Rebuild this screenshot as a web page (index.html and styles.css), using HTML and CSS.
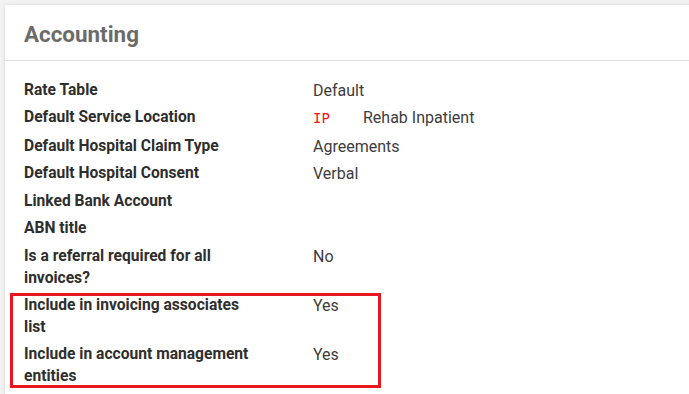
FILE: index.html
```html
<!DOCTYPE html>
<html>
<head>
<meta charset="utf-8">
<link rel="stylesheet" href="styles.css">
</head>
<body>
<div class="card">
  <div class="card-header"><h2 class="title">Accounting</h2></div>
  <div class="card-body">
    <div class="row"><div class="label">Rate Table</div><div class="value">Default</div></div>
    <div class="row"><div class="label">Default Service Location</div><div class="value"><code class="code">IP</code><span>Rehab Inpatient</span></div></div>
    <div class="row"><div class="label">Default Hospital Claim Type</div><div class="value">Agreements</div></div>
    <div class="row"><div class="label">Default Hospital Consent</div><div class="value">Verbal</div></div>
    <div class="row"><div class="label">Linked Bank Account</div><div class="value"></div></div>
    <div class="row"><div class="label">ABN title</div><div class="value"></div></div>
    <div class="row"><div class="label">Is a referral required for all invoices?</div><div class="value">No</div></div>
    <div class="row"><div class="label">Include in invoicing associates list</div><div class="value">Yes</div></div>
    <div class="row"><div class="label">Include in account management entities</div><div class="value">Yes</div></div>
  </div>
  <div class="highlight"></div>
</div>
</body>
</html>
```
FILE: styles.css
```css
html, body {
  margin: 0;
  padding: 0;
  overflow: hidden;
}
body {
  background: #f3f3f3;
  padding: 5px 0 0 5px;
  font-family: Roboto, "Liberation Sans", sans-serif;
  height: 394px;
  box-sizing: border-box;
}
.card {
  position: relative;
  width: 720px;
  background: #fff;
  box-shadow: 0 0 4px rgba(0,0,0,0.12);
  border-radius: 2px;
  min-height: 400px;
}
.card-header {
  padding: 15.5px 19px 13.5px;
  border-bottom: 1px solid #dcdcdc;
}
.title {
  margin: 0;
  font-size: 22.4px;
  line-height: 26px;
  font-weight: 700;
  color: #6b6b6b;
}
.card-body {
  padding: 16px 19px;
}
.row {
  display: flex;
  padding: 3px 0 2.7px;
  line-height: 21.8px;
}
.label {
  width: 238px;
  margin-right: 51px;
  font-size: 15.6px;
  font-weight: 700;
  color: #2e2e2e;
  flex: none;
}
.value {
  font-size: 16px;
  color: #3c3c3c;
  display: flex;
  align-items: baseline;
}
.code {
  font-family: "DejaVu Sans Mono", "Liberation Mono", monospace;
  font-size: 14px;
  color: #f5101a;
  width: 50px;
}
.highlight {
  position: absolute;
  left: 5px;
  top: 288px;
  width: 365px;
  height: 89px;
  border: 3px solid #e8161f;
}
```
